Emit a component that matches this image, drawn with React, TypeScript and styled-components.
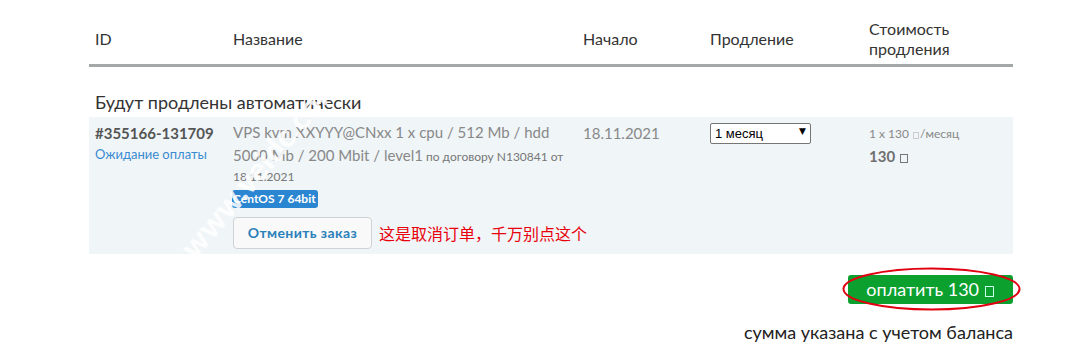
import React from "react";
import styled, { createGlobalStyle } from "styled-components";

const Global = createGlobalStyle`
  html, body { margin: 0; padding: 0; background: #fff; }
  body { font-family: Lato, "Open Sans", sans-serif; color: #333; }
`;

const Page = styled.div`
  position: relative;
  width: 924px;
  padding: 0 64px 0 89px;
  overflow: hidden;
`;

const cols = "138px 350px 127px 159px 150px";

const HeaderRow = styled.div`
  display: grid;
  grid-template-columns: ${cols};
  align-items: center;
  padding: 19px 0 5px;
  border-bottom: 3px solid #a4a8a9;
`;

const HeadCell = styled.div`
  padding: 0 6px;
  font-size: 16px;
  line-height: 20px;
  color: #333;
`;

const SectionTitle = styled.h3`
  margin: 23px 0 2px;
  padding: 0 6px;
  font-size: 18px;
  line-height: 25px;
  font-weight: 400;
  color: #333;
`;

const Row = styled.div`
  display: grid;
  grid-template-columns: ${cols};
  align-items: start;
  background: #f0f5f8;
  padding: 5px 0 5px;
`;

const Cell = styled.div`
  padding: 0 6px;
  display: flex;
  flex-direction: column;
  align-items: flex-start;
`;

const OrderId = styled.div`
  font-size: 15px;
  font-weight: 700;
  line-height: 22px;
  color: #555;
`;

const StatusLink = styled.a`
  font-size: 13px;
  line-height: 20px;
  color: #3a8ad0;
  text-decoration: none;
`;

const NameText = styled.div`
  font-size: 12px;
  line-height: 20.5px;
  color: #777;
`;

const NameMain = styled.span`
  font-size: 15px;
  color: #888;
`;

const Badge = styled.span`
  margin: 2px 0 0 -1px;
  display: inline-block;
  height: 18px;
  line-height: 18px;
  padding: 0 2px 0 1px;
  background: #2b86d2;
  color: #fff;
  font-size: 12px;
  font-weight: 700;
  border-radius: 3px;
`;

const ActionLine = styled.div`
  margin-top: 9px;
  display: flex;
  align-items: center;
  gap: 7px;
`;

const CancelButton = styled.button`
  width: 139px;
  height: 32px;
  border: 1px solid #cfd3d5;
  border-radius: 4px;
  background: #f9f9f9;
  color: #2a80ba;
  font-family: Lato, sans-serif;
  font-size: 14px;
  font-weight: 700;
  letter-spacing: 0.4px;
  cursor: pointer;
`;

const Note = styled.span`
  font-family: "Noto Sans CJK SC", sans-serif;
  font-size: 16px;
  color: #e8000b;
  white-space: nowrap;
`;

const DateText = styled.div`
  font-size: 15px;
  line-height: 22px;
  color: #888;
`;

const SelectWrap = styled.div`
  position: relative;
  width: 101px;
  height: 21px;
`;

const Select = styled.select`
  appearance: none;
  -webkit-appearance: none;
  width: 101px;
  height: 21px;
  border: 1px solid #767676;
  border-radius: 2px;
  background: #fff;
  font-family: Arial, "Liberation Sans", sans-serif;
  font-size: 13px;
  color: #000;
  padding: 0 0 0 4px;
`;

const Arrow = styled.span`
  position: absolute;
  right: 5px;
  top: 4px;
  font-size: 9px;
  color: #000;
  pointer-events: none;
  font-family: "DejaVu Sans", sans-serif;
`;

const PriceLine = styled.div`
  margin-top: 4px;
  font-size: 12px;
  line-height: 16px;
  color: #888;
`;

const PriceTotal = styled.div`
  margin-top: 4px;
  font-size: 15px;
  font-weight: 700;
  line-height: 20px;
  color: #707070;
`;

const Tofu = styled.span<{ $size: number; $color: string }>`
  display: inline-block;
  width: ${(p) => Math.round(p.$size * 0.5)}px;
  height: ${(p) => Math.round(p.$size * 0.62)}px;
  border: 1px solid ${(p) => p.$color};
  box-sizing: border-box;
  vertical-align: -1px;
  margin: 0 1px;
`;

const Footer = styled.div`
  display: flex;
  flex-direction: column;
  align-items: flex-end;
  margin-top: 21px;
`;

const PayWrap = styled.div`
  position: relative;
`;

const PayButton = styled.button`
  width: 165px;
  height: 29px;
  border: none;
  border-radius: 3px;
  background: #0ca12f;
  color: #fff;
  font-family: Lato, sans-serif;
  font-size: 18px;
  padding: 0;
  cursor: pointer;
`;

const Ellipse = styled.svg`
  position: absolute;
  left: -6px;
  top: -8px;
  pointer-events: none;
`;

const BalanceNote = styled.div`
  margin-top: 17px;
  font-size: 18px;
  line-height: 22px;
  color: #222;
`;

const Watermark = styled.div`
  position: absolute;
  left: 145px;
  top: 146px;
  transform: rotate(-50deg);
  font-family: Lato, sans-serif;
  font-weight: 900;
  font-size: 32px;
  color: #fff;
  opacity: 0.85;
  white-space: nowrap;
  pointer-events: none;
`;

export default function App() {
  return (
    <>
      <Global />
      <Page>
        <HeaderRow>
          <HeadCell>ID</HeadCell>
          <HeadCell>Название</HeadCell>
          <HeadCell>Начало</HeadCell>
          <HeadCell>Продление</HeadCell>
          <HeadCell>
            Стоимость
            <br />
            продления
          </HeadCell>
        </HeaderRow>
        <SectionTitle>Будут продлены автоматически</SectionTitle>
        <Row>
          <Cell>
            <OrderId>#355166-131709</OrderId>
            <StatusLink href="#">Ожидание оплаты</StatusLink>
          </Cell>
          <Cell>
            <NameText>
              <NameMain>VPS kvm XXYYY@CNxx 1 x cpu / 512 Mb / hdd 5000 Mb / 200 Mbit / level1</NameMain>{" "}
              по договору N130841 от 18.11.2021
            </NameText>
            <Badge>CentOS 7 64bit</Badge>
            <ActionLine>
              <CancelButton>Отменить заказ</CancelButton>
              <Note>这是取消订单，千万别点这个</Note>
            </ActionLine>
          </Cell>
          <Cell>
            <DateText>18.11.2021</DateText>
          </Cell>
          <Cell>
            <SelectWrap>
              <Select defaultValue="1">
                <option value="1">1 месяц</option>
              </Select>
              <Arrow>▼</Arrow>
            </SelectWrap>
          </Cell>
          <Cell>
            <PriceLine>
              1 x 130 <Tofu $size={12} $color="#ccc" />/месяц
            </PriceLine>
            <PriceTotal>
              130 <Tofu $size={15} $color="#777" />
            </PriceTotal>
          </Cell>
        </Row>
        <Footer>
          <PayWrap>
            <PayButton>
              оплатить 130 <Tofu $size={18} $color="#cfe" />
            </PayButton>
            <Ellipse width="179" height="44" viewBox="0 0 179 44">
              <ellipse cx="89.5" cy="22" rx="88" ry="20.5" fill="none" stroke="#e00010" strokeWidth="2" />
            </Ellipse>
          </PayWrap>
          <BalanceNote>сумма указана с учетом баланса</BalanceNote>
        </Footer>
        <Watermark>www.veidc.com</Watermark>
      </Page>
    </>
  );
}
